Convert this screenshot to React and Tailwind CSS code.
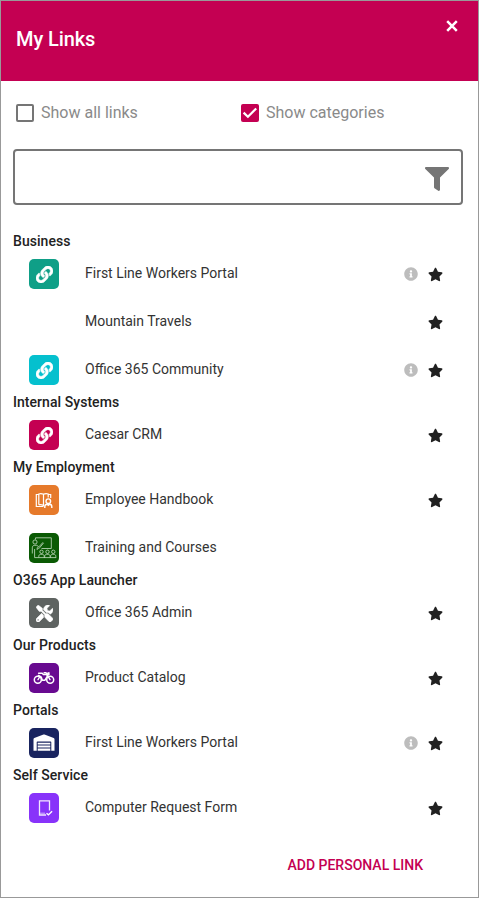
import React from "react";
import { FaFilter, FaInfoCircle, FaLink, FaStar, FaTools } from "react-icons/fa";

function ChainIcon() {
  return <FaLink size={17} stroke="white" strokeWidth="16" />;
}

function HandbookIcon() {
  return (
    <svg width="30" height="30" viewBox="0 0 30 30" fill="none" stroke="white" strokeWidth="1.2">
      <path d="M9.500 9.500h-2.200v12h7M9.800 19.800v-10.800c1.500-.6 3.200-.5 4.700.3v11.200c-1.500-.8-3.200-1-4.700-.7" />
      <path d="M14.500 9.300c1.500-.8 3.200-.9 4.700-.3v3.500M19.200 9.500h2.500v3.500" />
      <circle cx="19.300" cy="16.200" r="2.300" strokeWidth="1.400" />
      <path d="M15.800 22.900v-1.200c0-1.600 1.200-2.400 2.300-2.400l1.200 1 1.200-1c1.200 0 2.300.8 2.300 2.400v1.200" strokeWidth="1.400" />
    </svg>
  );
}

function TrainingIcon() {
  return (
    <svg width="30" height="30" viewBox="0 0 30 30" fill="none" stroke="#c5ddc3" strokeWidth="0.8">
      <path d="M6.500 6.500v-1.700h15.800v10.700h-9.800" />
      <circle cx="6" cy="9" r="2.100" />
      <path d="M3.300 20.500v-5.700c0-1.600 1-2.500 2.500-2.500h2l2 1.600 4-4.300.6.600-4.300 5.200-1.900-.7v2.300M5.600 16v8.600h4" />
      <circle cx="12.500" cy="18.800" r="1.700" />
      <circle cx="18.500" cy="18.800" r="1.700" />
      <circle cx="24.300" cy="18.800" r="1.700" />
      <path d="M9.800 24.600v-1.300c0-1.300.9-2 1.900-2h1.600c1 0 1.900.7 1.900 2v1.300M15.700 24.600v-1.300c0-1.300.9-2 1.900-2h1.600c1 0 1.900.7 1.900 2v1.300M21.600 24.600v-1.300c0-1.300.9-2 1.900-2h1.400c1 0 1.900.7 1.900 2v1.300M9.400 24.600h17.800" />
    </svg>
  );
}

function MotorcycleIcon() {
  return (
    <svg width="30" height="30" viewBox="0 0 30 30" fill="none" stroke="white" strokeLinecap="round" strokeLinejoin="round">
      <circle cx="8.800" cy="16.700" r="3.500" strokeWidth="1.500" />
      <circle cx="21.200" cy="16.700" r="3.500" strokeWidth="1.500" />
      <path d="M9 16.700l2-3.200M21 16.700l-3.900-6.900h-2" strokeWidth="1.400" />
      <path d="M9.600 10.200h3.600l1.200 1.300h3.400l.6 1.500-2.400 4.200h-2.600l-1.300-3.400-2.600-1.300" strokeWidth="1.500" />
      <path d="M17.800 10.200l2.400-.8v2.600h-1.500z" fill="white" strokeWidth="0.800" />
    </svg>
  );
}

function WarehouseIcon() {
  return (
    <svg width="30" height="30" viewBox="0 0 30 30" fill="white">
      <path d="M4.500 22.800V11.300c0-.6.3-1 .8-1.200L14.500 6.500q.5-.2 1 0l9.200 3.600c.5.200.8.6.8 1.200v11.500h-3.200v-8.500q0-.7-.7-.7H8.400q-.7 0-.7.700v8.500z" />
      <path d="M8.700 14.700h12.600v1.900H8.700zM8.700 17.600h12.600v2H8.700zM8.700 20.600h12.600v2.200H8.700z" />
    </svg>
  );
}

function FormIcon() {
  return (
    <svg width="30" height="30" viewBox="0 0 30 30" fill="none" stroke="#f2e8ff">
      <path d="M20.500 17.500v-9.700h-10v14.200h6.500" strokeWidth="1.300" />
      <path d="M11 20.200h5" strokeWidth="0.700" />
      <path d="M17.500 20.300l1.900 1.600 3.700-3.700" strokeWidth="1.400" stroke="white" />
    </svg>
  );
}

const groups = [
  {
    title: "Business",
    links: [
      { name: "First Line Workers Portal", tile: "bg-[#0f9f87]", icon: <ChainIcon />, info: true, star: true },
      { name: "Mountain Travels", star: true },
      { name: "Office 365 Community", tile: "bg-[#05c0ce]", icon: <ChainIcon />, info: true, star: true },
    ],
  },
  {
    title: "Internal Systems",
    links: [{ name: "Caesar CRM", tile: "bg-[#c40052]", icon: <ChainIcon />, star: true }],
  },
  {
    title: "My Employment",
    links: [
      { name: "Employee Handbook", tile: "bg-[#e67a2b]", icon: <HandbookIcon />, star: true },
      { name: "Training and Courses", tile: "bg-[#0a5a04]", icon: <TrainingIcon /> },
    ],
  },
  {
    title: "O365 App Launcher",
    links: [
      {
        name: "Office 365 Admin",
        tile: "bg-[#5e6361]",
        icon: <FaTools size={17} stroke="white" strokeWidth="14" />,
        star: true,
      },
    ],
  },
  {
    title: "Our Products",
    links: [{ name: "Product Catalog", tile: "bg-[#680a90]", icon: <MotorcycleIcon />, star: true }],
  },
  {
    title: "Portals",
    links: [{ name: "First Line Workers Portal", tile: "bg-[#19245f]", icon: <WarehouseIcon />, info: true, star: true }],
  },
  {
    title: "Self Service",
    links: [{ name: "Computer Request Form", tile: "bg-[#8833fa]", icon: <FormIcon />, star: true }],
  },
];

function LinkRow({ link }) {
  return (
    <li className="flex h-12 items-center pl-4 pr-[23px]">
      <span className={`flex size-[30px] shrink-0 items-center justify-center rounded-[5px] text-white ${link.tile ?? ""}`}>
        {link.icon}
      </span>
      <span className="ml-[26px] flex-1 pb-0.5 text-sm text-[#333]">{link.name}</span>
      {link.info && <FaInfoCircle size={14} className="mr-[10px] text-[#bdbdbd]" />}
      {link.star && <FaStar size={15} className="text-[#212121]" />}
    </li>
  );
}

function Option({ label, checked }) {
  return (
    <label className="flex w-[225px] items-center">
      <span
        className={`flex size-[18px] items-center justify-center rounded-[2px] ${
          checked ? "bg-[#c40052]" : "border-2 border-[#757575]"
        }`}
      >
        {checked && (
          <svg width="18" height="18" viewBox="0 0 18 18" fill="none" stroke="white" strokeWidth="2.200">
            <path d="M2.600 8.600l4.300 4.200L15.200 4.400" />
          </svg>
        )}
      </span>
      <span className="ml-[7px] text-base text-[#8a8a8a]">{label}</span>
    </label>
  );
}

export default function App() {
  return (
    <div className="flex h-[898px] w-[479px] flex-col border border-[#999] bg-white font-['Roboto',sans-serif]">
      <header className="flex h-20 shrink-0 items-start justify-between bg-[#c40052] pl-[15px] pr-[20px] text-white">
        <h1 className="mt-6 text-xl leading-7 font-medium tracking-[-0.1px]">My Links</h1>
        <button aria-label="Close" className="mt-[19px]">
          <svg width="12" height="12" viewBox="0 0 12 12" fill="none" stroke="white" strokeWidth="2.500">
            <path d="M1.200 1.200l9.600 9.600M10.800 1.200L1.200 10.800" />
          </svg>
        </button>
      </header>

      <div className="mt-5 flex h-6 items-center pl-[15px]">
        <Option label="Show all links" />
        <Option label="Show categories" checked />
      </div>

      <div className="mt-6 mr-[15px] ml-3 flex h-14 shrink-0 items-center justify-end rounded-[4px] border-2 border-[#757575] pr-3">
        <FaFilter size={24} className="mt-1 text-[#757575]" />
      </div>

      <main className="mt-[28px] px-3">
        {groups.map((group) => (
          <section key={group.title}>
            <h2 className="h-[17px] text-sm leading-[17px] font-medium tracking-[0.05px] text-[#222]">{group.title}</h2>
            <ul>
              {group.links.map((link) => (
                <LinkRow key={link.name} link={link} />
              ))}
            </ul>
          </section>
        ))}
      </main>

      <footer className="mt-[23px] flex justify-end pr-[55px]">
        <button className="text-sm leading-5 font-medium text-[#c40052]">ADD PERSONAL LINK</button>
      </footer>
    </div>
  );
}
